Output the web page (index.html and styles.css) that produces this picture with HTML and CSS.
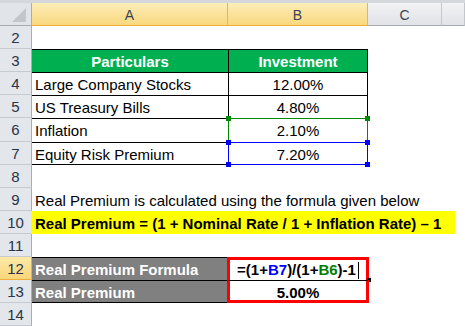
FILE: index.html
```html
<!DOCTYPE html>
<html>
<head>
<meta charset="utf-8">
<link rel="stylesheet" href="styles.css">
</head>
<body>
<div class="sheet">
  <div class="strip"></div>

  <div class="hd corner"><svg class="tri" width="14" height="14" viewBox="0 0 14 14"><polygon points="14,0 14,14 0,14" fill="#c3c7cc"/></svg></div>
  <div class="hd sel">A</div>
  <div class="hd sel">B</div>
  <div class="hd">C</div>
  <div class="hd"></div>

  <div class="rn">2</div><div class="c"></div><div class="c"></div><div class="c"></div><div class="c"></div>

  <div class="rn">3</div>
  <div class="c t th">Particulars</div>
  <div class="c t b th">Investment</div>
  <div class="c"></div><div class="c"></div>

  <div class="rn">4</div>
  <div class="c t">Large Company Stocks</div>
  <div class="c t b">12.00%</div>
  <div class="c"></div><div class="c"></div>

  <div class="rn">5</div>
  <div class="c t">US Treasury Bills</div>
  <div class="c t b">4.80%</div>
  <div class="c"></div><div class="c"></div>

  <div class="rn">6</div>
  <div class="c t">Inflation</div>
  <div class="c b ref green"><span class="h tl"></span><span class="h tr"></span>2.10%</div>
  <div class="c"></div><div class="c"></div>

  <div class="rn">7</div>
  <div class="c t last">Equity Risk Premium</div>
  <div class="c b ref blue"><span class="h tl"></span><span class="h tr"></span><span class="h bl"></span><span class="h br"></span>7.20%</div>
  <div class="c"></div><div class="c"></div>

  <div class="rn">8</div><div class="c"></div><div class="c"></div><div class="c"></div><div class="c"></div>

  <div class="rn">9</div>
  <div class="c span">Real Premium is calculated using the formula given below</div>

  <div class="rn">10</div>
  <div class="c span yellow">Real Premium = (1 + Nominal Rate / 1 + Inflation Rate) &ndash; 1</div>

  <div class="rn">11</div><div class="c"></div><div class="c"></div><div class="c"></div><div class="c"></div>

  <div class="rn rsel">12</div>
  <div class="c t gray">Real Premium Formula</div>
  <div class="c red-top bold center">=(1+<span class="r-blue">B7</span>)/(1+<span class="r-green">B6</span>)-1<span class="caret"></span><span class="fill"></span></div>
  <div class="c"></div><div class="c"></div>

  <div class="rn">13</div>
  <div class="c t last gray">Real Premium</div>
  <div class="c red-bot bold center">5.00%</div>
  <div class="c"></div><div class="c"></div>

  <div class="rn">14</div><div class="c"></div><div class="c"></div><div class="c"></div><div class="c"></div>
</div>
</body>
</html>
```

FILE: styles.css
```css
* { box-sizing: border-box; }
html, body { margin: 0; padding: 0; background: #fff; }
body {
  font-family: "Liberation Sans", Arial, sans-serif;
  font-size: 15px;
  color: #000;
}
.sheet {
  display: grid;
  grid-template-columns: 32px 196px 140px 74px 23px;
  grid-template-rows: 3px 23px 23px 23px 23px 23px 24px 23px 23px 23px 23px 23px 23px 23px 23px;
  width: 465px;
  height: 326px;
  overflow: hidden;
}
.strip { grid-column: 1 / -1; background: #d4d7dc; }

.hd {
  background: linear-gradient(#f1f2f4, #e0e3e7);
  border-right: 1px solid #c3c6cb;
  border-bottom: 1px solid #a8acb2;
  display: flex;
  align-items: center;
  justify-content: center;
  font-size: 14px;
  color: #3a4350;
  padding-top: 1px;
}
.hd.corner {
  background: #e1e4e8;
  border-right: 1px solid #a9adb3;
  position: relative;
}
.tri { position: absolute; right: 5px; bottom: 3px; }
.hd.sel {
  background: linear-gradient(#fdedb8, #f9d87f);
  border-right-color: #f0b540;
  border-bottom: 1px solid #eeaf38;
}

.rn {
  background: #e3e6ea;
  border-right: 1px solid #a9adb3;
  border-bottom: 1px solid #c7cad0;
  text-align: center;
  color: #27344a;
  font-size: 15px;
  line-height: 18px;
  padding-top: 3px;
}
.rn.rsel {
  background: linear-gradient(#fde9a8, #f9d67a);
  border-right-color: #eeaf38;
  border-bottom-color: #eeaf38;
}

.c {
  position: relative;
  white-space: nowrap;
  padding: 4px 3px 0 3px;
  line-height: 18px;
}
.t { border-top: 1px solid #000; padding-top: 3px; }
.last { border-bottom: 1px solid #000; }
.b {
  border-left: 1px solid #000;
  border-right: 1px solid #000;
  text-align: center;
}
.th {
  background: #00b050;
  color: #fff;
  font-weight: bold;
  text-align: center;
}
.span { grid-column: span 4; }
.yellow {
  background: #ffff00;
  font-weight: bold;
  margin-right: 10px;
  margin-left: -1px;
  padding-left: 4px;
}
.gray {
  background: #808080;
  color: #fff;
  font-weight: bold;
}
.bold { font-weight: bold; }
.center { text-align: center; }

.ref { padding-top: 3px; }
.green { border: 1px solid #008a00; border-bottom: none; }
.blue { border: 1px solid #0000ff; }
.h {
  position: absolute;
  width: 5px;
  height: 5px;
}
.green .h { background: #008a00; }
.blue .h { background: #0000ff; }
.h.tl { left: -3px; top: -3px; }
.h.tr { right: -3px; top: -3px; }
.h.bl { left: -3px; bottom: -3px; }
.h.br { right: -3px; bottom: -3px; }
.green .h.tl, .green .h.tr { top: -3px; }

.r-blue { color: #0000ff; }
.r-green { color: #008000; }

.red-top {
  border: 3px solid #ff0000;
  border-bottom: none;
  margin-left: -1px;
  margin-right: -1px;
  padding-top: 1px;
}
.red-bot {
  border: 3px solid #ff0000;
  border-top: 1px solid #000;
  margin-left: -1px;
  margin-right: -1px;
  padding-top: 3px;
}
.caret {
  display: inline-block;
  width: 1px;
  height: 17px;
  background: #000;
  vertical-align: -4px;
  margin-left: 2px;
}
.fill {
  position: absolute;
  right: -5px;
  bottom: -2px;
  width: 4px;
  height: 4px;
  background: #000;
}
```
